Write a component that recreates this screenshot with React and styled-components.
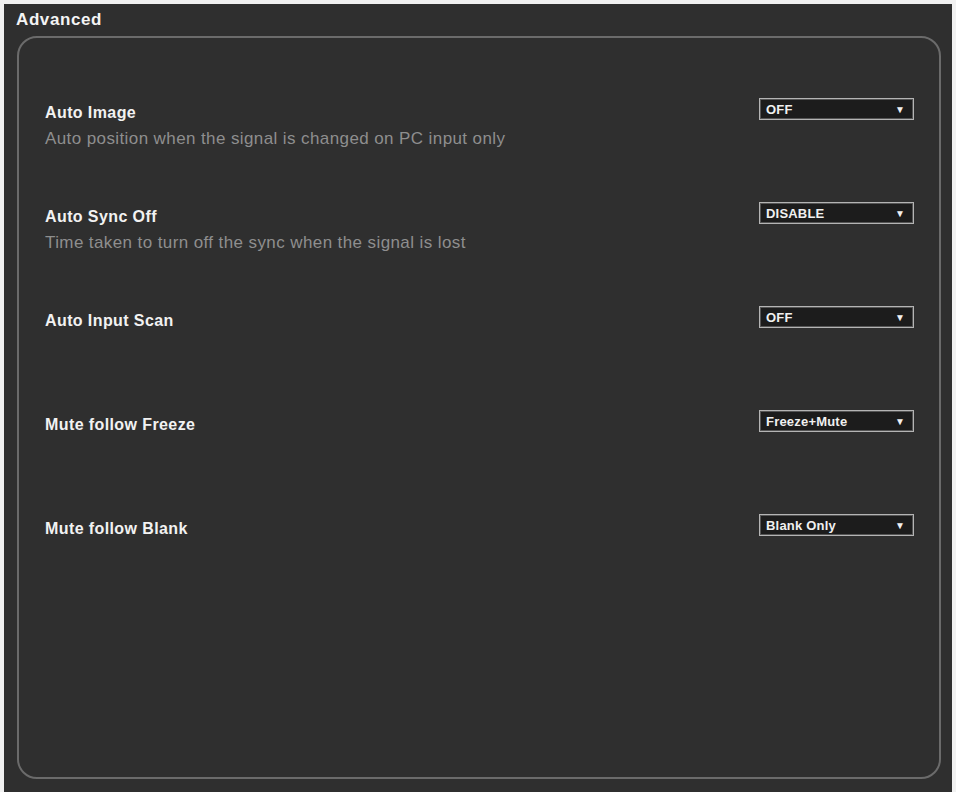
import React from 'react';
import styled, { createGlobalStyle } from 'styled-components';

const GlobalStyle = createGlobalStyle`
  * { box-sizing: border-box; }
  html, body {
    margin: 0;
    padding: 0;
    background: #f1f1f1;
    font-family: "Liberation Sans", Arial, sans-serif;
  }
`;

const settings = [
  { label: 'Auto Image', desc: 'Auto position when the signal is changed on PC input only', value: 'OFF' },
  { label: 'Auto Sync Off', desc: 'Time taken to turn off the sync when the signal is lost', value: 'DISABLE' },
  { label: 'Auto Input Scan', value: 'OFF' },
  { label: 'Mute follow Freeze', value: 'Freeze+Mute' },
  { label: 'Mute follow Blank', value: 'Blank Only' },
];

function App() {
  return (
    <>
      <GlobalStyle />
      <Page>
        <Panel>
          <Title>Advanced</Title>
          <Box>
            {settings.map((s) => (
              <Row key={s.label}>
                <LabelCol>
                  <Label>{s.label}</Label>
                  {s.desc && <Desc>{s.desc}</Desc>}
                </LabelCol>
                <Dropdown>
                  <Value>{s.value}</Value>
                  <Arrow>▼</Arrow>
                </Dropdown>
              </Row>
            ))}
          </Box>
        </Panel>
      </Page>
    </>
  );
}

export default App;

const Page = styled.div`
  width: 956px;
  height: 792px;
  padding: 4px 4px 0 4px;
`;

const Panel = styled.section`
  height: 788px;
  background: #2f2f2f;
  display: flex;
  flex-direction: column;
`;

const Title = styled.h2`
  margin: 0;
  height: 32px;
  padding: 6px 0 0 12px;
  font-size: 17px;
  line-height: 20px;
  font-weight: bold;
  letter-spacing: 0.6px;
  color: #f4f4f4;
`;

const Box = styled.div`
  flex: 1;
  margin: 0 11px 13px 13px;
  border: 2px solid #6b6b6b;
  border-radius: 20px;
  padding: 60px 25px 0 26px;
  display: flex;
  flex-direction: column;
`;

const Row = styled.div`
  height: 104px;
  display: flex;
  justify-content: space-between;
  align-items: flex-start;
`;

const LabelCol = styled.div`
  padding-top: 5px;
  display: flex;
  flex-direction: column;
`;

const Label = styled.div`
  font-size: 16px;
  line-height: 20px;
  font-weight: bold;
  letter-spacing: 0.4px;
  color: #f2f2f2;
`;

const Desc = styled.div`
  margin-top: 6px;
  font-size: 17px;
  line-height: 20px;
  letter-spacing: 0.4px;
  color: #8e8e8e;
`;

const Dropdown = styled.div`
  width: 155px;
  height: 22px;
  border: 1px solid #b4b4b4;
  box-shadow: inset 0 0 0 1px #555;
  background: #1c1c1c;
  display: flex;
  align-items: center;
  justify-content: space-between;
  padding: 0 8px 0 6px;
`;

const Value = styled.span`
  font-size: 13px;
  font-weight: bold;
  letter-spacing: 0.2px;
  color: #f0f0f0;
`;

const Arrow = styled.span`
  font-size: 10px;
  color: #f0f0f0;
`;
